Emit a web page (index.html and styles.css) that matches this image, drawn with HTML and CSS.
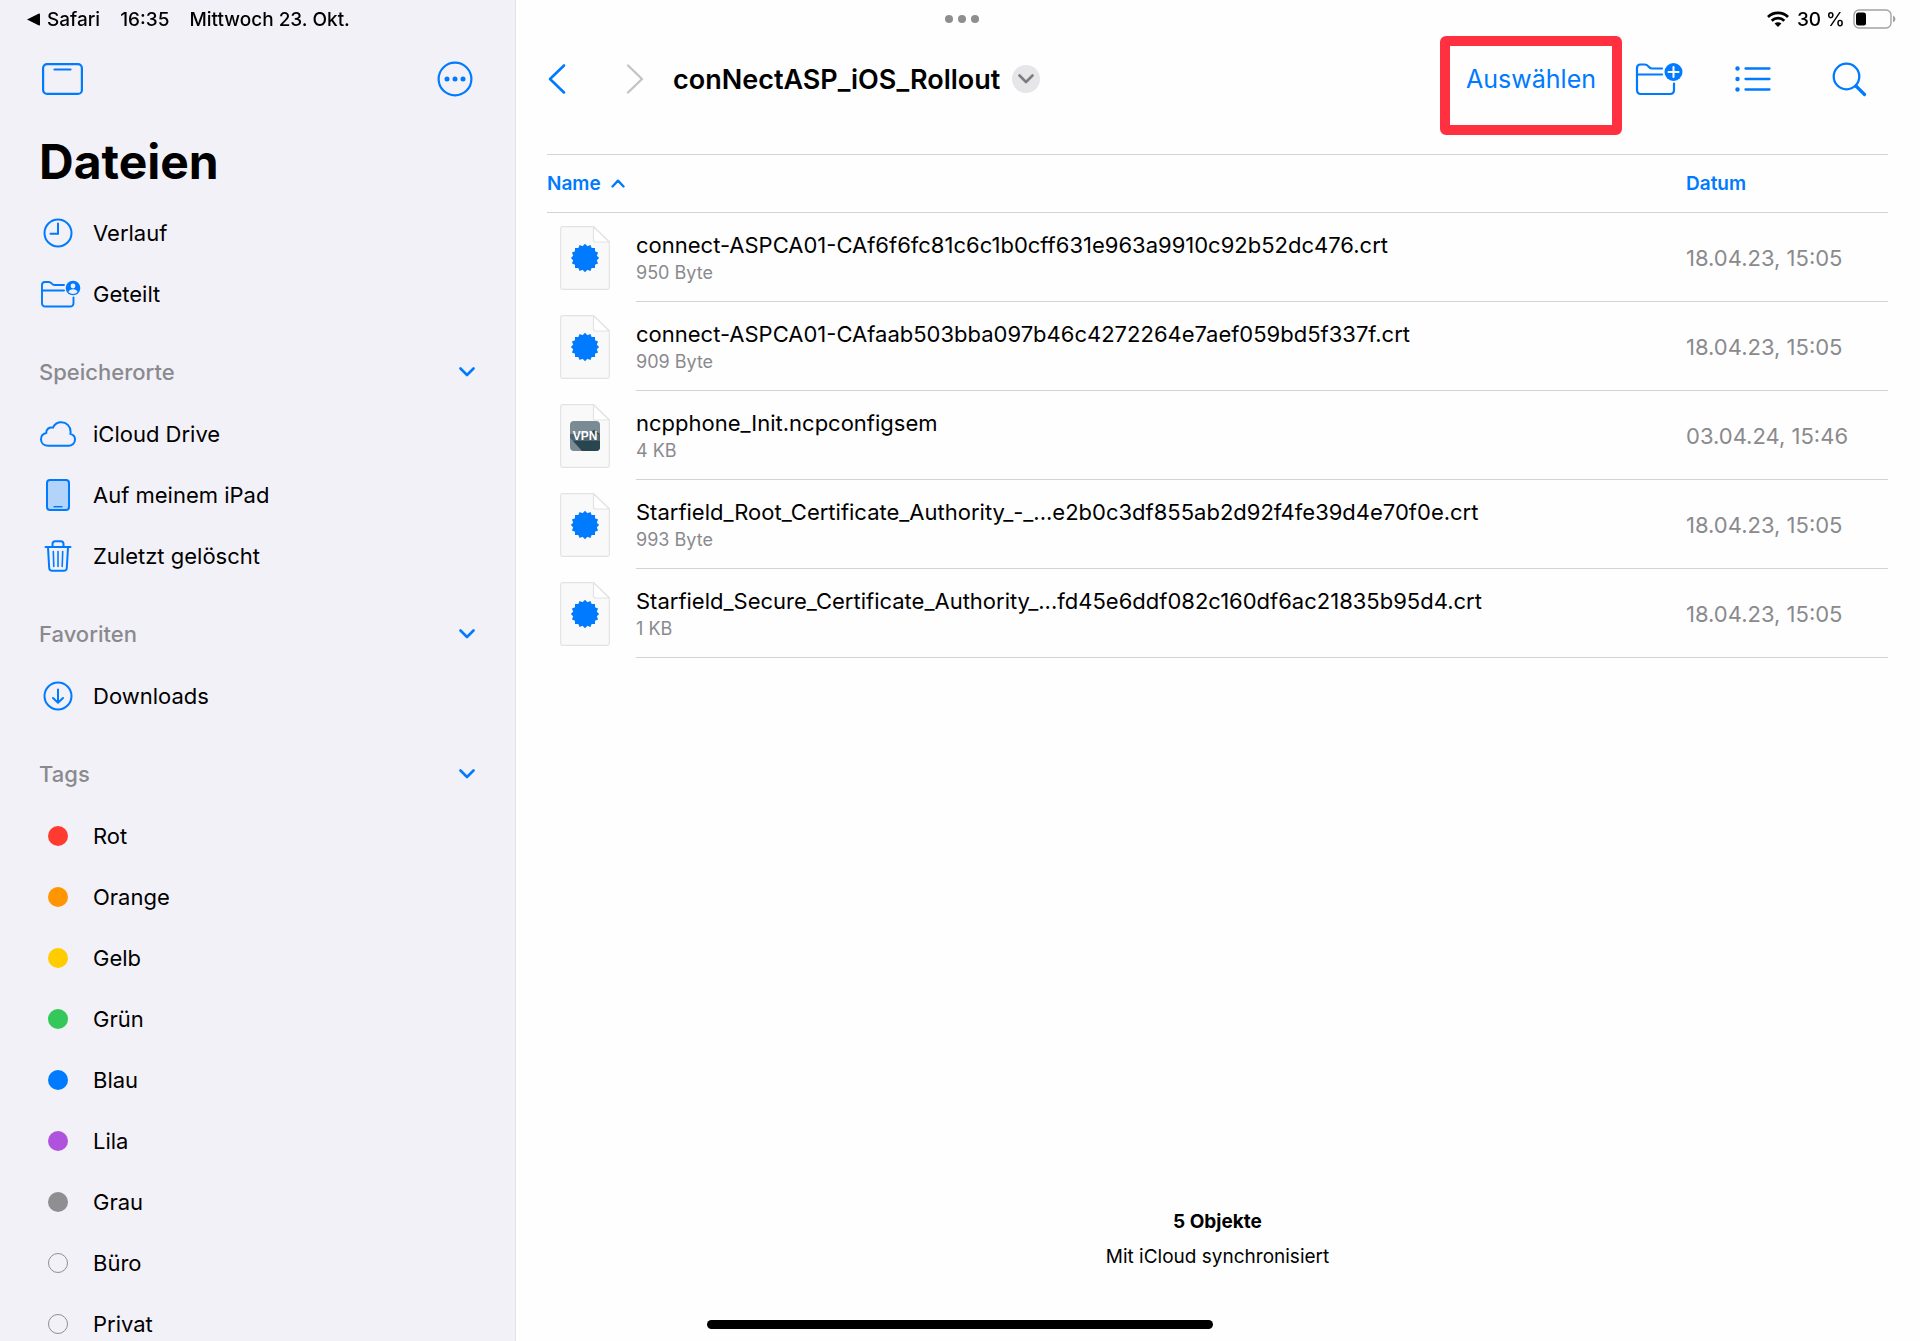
FILE: index.html
```html
<!DOCTYPE html>
<html lang="de">
<head>
    <meta charset="utf-8">
    <meta name="viewport" content="width=device-width, initial-scale=1">
    <title>Dateien</title>
    <link rel="stylesheet" href="styles.css">
</head>
<body>
    <!-- shared shapes -->
    <svg class="defs" aria-hidden="true">
        <symbol id="chevron-down" viewBox="0 0 16 10">
            <path d="M1.500 1.500 8 8l6.500-6.500" fill="none" stroke="currentColor" stroke-width="2.600" stroke-linecap="round" stroke-linejoin="round"/>
        </symbol>
        <symbol id="page" viewBox="0 0 50 64">
            <path d="M2.500.7H33.500L49.300 16V61.500a1.800 1.800 0 0 1-1.800 1.800H2.500A1.800 1.800 0 0 1 .7 61.500V2.500A1.800 1.800 0 0 1 2.500.7Z" fill="#f9f9f9" stroke="#e3e3e5" stroke-width="1.200"/>
            <path d="M33.500.7V14a2 2 0 0 0 2 2H49.300Z" fill="#fff" stroke="#e3e3e5" stroke-width="1.200"/>
        </symbol>
        <symbol id="cert-file" viewBox="0 0 50 64">
            <use href="#page"/>
            <g transform="translate(25 32)" fill="#007aff">
                <rect x="-10" y="-10" width="20" height="20"/>
                <rect x="-10" y="-10" width="20" height="20" transform="rotate(22.5)"/>
                <rect x="-10" y="-10" width="20" height="20" transform="rotate(45)"/>
                <rect x="-10" y="-10" width="20" height="20" transform="rotate(67.5)"/>
            </g>
        </symbol>
    </svg>

    <header class="status">
        <div class="status-left">
            <a href="#" class="back-app"><svg width="13" height="13" viewBox="0 0 13 13"><path d="M0 6.500 12 .5Q13 .3 13 1.500v10q0 1.200-1 1Z"/></svg>Safari</a>
            <span>16:35</span>
            <span>Mittwoch 23. Okt.</span>
        </div>
        <button class="multitask" aria-label="Multitasking"><i></i><i></i><i></i></button>
        <div class="status-right">
            <svg width="22" height="16" viewBox="0 0 22 16">
                <g fill="none" stroke="#000" stroke-width="2.800">
                    <path d="M1 6a14.300 14.300 0 0 1 20 0"/>
                    <path d="M4.700 9.700a9 9 0 0 1 12.600 0"/>
                </g>
                <path d="M11 16 7.600 12.600a4.900 4.900 0 0 1 6.800 0Z"/>
            </svg>
            <span>30 %</span>
            <svg width="43" height="20" viewBox="0 0 43 20">
                <rect x="1" y="1" width="37" height="18" rx="5" fill="none" stroke="#a3a3a5" stroke-width="1.400"/>
                <rect x="3" y="3.500" width="10" height="13" rx="2.500"/>
                <path d="M40 6.500q2.500 1 2.500 3.500t-2.500 3.500Z" fill="#a3a3a5"/>
            </svg>
        </div>
    </header>

    <div class="app">
        <aside class="sidebar">
            <div class="toolbar">
                <button aria-label="Seitenleiste">
                    <svg width="41" height="32" viewBox="0 0 41 32" fill="none" stroke="currentColor" stroke-width="2.200" stroke-linecap="round"><rect x="1.100" y="1.100" width="38.800" height="29.800" rx="4"/><path d="M12.500 6.500h16"/></svg>
                </button>
                <button aria-label="Mehr">
                    <svg width="36" height="36" viewBox="0 0 36 36"><circle cx="18" cy="18" r="16.400" fill="none" stroke="currentColor" stroke-width="2.200"/><g fill="currentColor"><circle cx="10" cy="18" r="2.500"/><circle cx="18" cy="18" r="2.500"/><circle cx="26" cy="18" r="2.500"/></g></svg>
                </button>
            </div>
            <h1>Dateien</h1>
            <nav>
                <a href="#" class="item"><span class="icon">
                    <svg width="30" height="30" viewBox="0 0 30 30" fill="none" stroke="currentColor" stroke-width="2" stroke-linecap="round"><circle cx="15" cy="15" r="13.500"/><path d="M15 5.500V15.700H7.500"/></svg>
                </span>Verlauf</a>
                <a href="#" class="item"><span class="icon">
                    <svg class="wide" width="41" height="28" viewBox="0 0 41 28"><g fill="none" stroke="currentColor" stroke-width="1.900" stroke-linecap="round"><path d="M24 5H14.500Q13 5 11.800 3.600 10.500 2 8.500 2H5Q2 2 2 5V23q0 3.500 3.500 3.500H30q3.500 0 3.500-3.500V17.500"/><path d="M2 10.500H24"/></g><circle cx="33" cy="8" r="7.300" fill="currentColor"/><circle cx="33" cy="6" r="2.400" fill="#f2f1f7"/><path d="M28.500 12.300q.6-3 4.500-3t4.500 3Q35.500 14 33 14t-4.500-1.700Z" fill="#f2f1f7"/></svg>
                </span>Geteilt</a>

                <button class="section">Speicherorte<svg width="16" height="10"><use href="#chevron-down"/></svg></button>
                <a href="#" class="item"><span class="icon">
                    <svg width="36" height="26" viewBox="0 0 36 26" fill="none" stroke="currentColor" stroke-width="2"><path d="M8.500 24.800C4 24.800 1 22 1 18.200 1 15 3.200 12.600 6.200 12 6 8.500 9.200 5.600 13 6.600 14.600 3 17.800 1.200 21.200 1.200c5.300 0 9.300 4 9.400 9.500 0 .9 0 1.500-.2 2.200 2.800.7 4.600 2.800 4.600 5.600 0 3.600-2.800 6.300-6.500 6.300Z"/></svg>
                </span>iCloud Drive</a>
                <a href="#" class="item"><span class="icon">
                    <svg width="24" height="32" viewBox="0 0 24 32" stroke="currentColor" stroke-width="2"><rect x="1" y="1" width="22" height="30" rx="3" fill="#b2d4fb"/><path d="M7.500 27.700h9" stroke-width="1.500"/></svg>
                </span>Auf meinem iPad</a>
                <a href="#" class="item"><span class="icon">
                    <svg width="28" height="32" viewBox="0 0 28 32" fill="none" stroke="currentColor" stroke-width="2" stroke-linecap="round" stroke-linejoin="round"><path d="M1.500 7h25M8.500 6.500V4q0-2.800 2.800-2.800h5.400q2.800 0 2.800 2.800V6.500M4 7.500 5.200 28q.2 2.800 3 2.800H19.800q2.800 0 3-2.800L24 7.500"/><path d="M9.300 11.500 9.800 26.500M14 11.500V26.500M18.700 11.500 18.200 26.500" stroke-width="1.600"/></svg>
                </span>Zuletzt gelöscht</a>

                <button class="section">Favoriten<svg width="16" height="10"><use href="#chevron-down"/></svg></button>
                <a href="#" class="item"><span class="icon">
                    <svg width="30" height="30" viewBox="0 0 30 30" fill="none" stroke="currentColor" stroke-width="2" stroke-linecap="round" stroke-linejoin="round"><circle cx="15" cy="15" r="13.500"/><path d="M15 8.500V21.500M10 17l5 4.700 5-4.700"/></svg>
                </span>Downloads</a>

                <button class="section">Tags<svg width="16" height="10"><use href="#chevron-down"/></svg></button>
                <a href="#" class="item"><span class="icon"><i class="dot red"></i></span>Rot</a>
                <a href="#" class="item"><span class="icon"><i class="dot orange"></i></span>Orange</a>
                <a href="#" class="item"><span class="icon"><i class="dot yellow"></i></span>Gelb</a>
                <a href="#" class="item"><span class="icon"><i class="dot green"></i></span>Grün</a>
                <a href="#" class="item"><span class="icon"><i class="dot blue"></i></span>Blau</a>
                <a href="#" class="item"><span class="icon"><i class="dot purple"></i></span>Lila</a>
                <a href="#" class="item"><span class="icon"><i class="dot gray"></i></span>Grau</a>
                <a href="#" class="item"><span class="icon"><i class="dot empty"></i></span>Büro</a>
                <a href="#" class="item"><span class="icon"><i class="dot empty"></i></span>Privat</a>
            </nav>
        </aside>

        <main class="content">
            <div class="toolbar">
                <div class="path">
                    <button aria-label="Zurück">
                        <svg width="20" height="32" viewBox="0 0 20 32" fill="none" stroke="currentColor" stroke-width="2.600" stroke-linecap="round" stroke-linejoin="round"><path d="M17 2.500 3 16l14 13.500"/></svg>
                    </button>
                    <button class="forward" aria-label="Vorwärts" disabled>
                        <svg width="20" height="32" viewBox="0 0 20 32" fill="none" stroke="currentColor" stroke-width="2.400" stroke-linecap="round" stroke-linejoin="round"><path d="M3 2.500 17 16 3 29.500"/></svg>
                    </button>
                    <h2>conNectASP_iOS_Rollout</h2>
                    <button class="folder-menu" aria-label="Ordneroptionen"><svg width="16" height="10"><use href="#chevron-down"/></svg></button>
                </div>
                <div class="actions">
                    <button class="select">Auswählen</button>
                    <button aria-label="Neuer Ordner">
                        <svg width="48" height="34" viewBox="0 0 48 34"><g fill="none" stroke="currentColor" stroke-width="2.200" stroke-linecap="round"><path d="M27 6.500H17Q15 6.500 13.500 4.500 12.200 2.500 10 2.500H5.500Q2 2.500 2 6V28q0 4 4 4H35q4 0 4-4V21.500"/><path d="M2 12.500H27"/></g><circle cx="38.500" cy="10" r="9" fill="currentColor"/><path d="M38.500 5v10M33.500 10h10" stroke="#fff" stroke-width="2" stroke-linecap="round"/></svg>
                    </button>
                    <button aria-label="Listenansicht">
                        <svg width="36" height="28" viewBox="0 0 36 28"><path d="M10.500 3.500H34.500M10.500 14H34.500M10.500 24.500H34.500" stroke="currentColor" stroke-width="2.300" stroke-linecap="round"/><g fill="currentColor"><circle cx="2.500" cy="3.500" r="2.200"/><circle cx="2.500" cy="14" r="2.200"/><circle cx="2.500" cy="24.500" r="2.200"/></g></svg>
                    </button>
                    <button class="search" aria-label="Suchen">
                        <svg width="35" height="35" viewBox="0 0 35 35" fill="none" stroke="currentColor" stroke-linecap="round"><circle cx="14.500" cy="14.500" r="12.800" stroke-width="2.300"/><path d="M24 24 32.500 32.500" stroke-width="3.200"/></svg>
                    </button>
                </div>
            </div>

            <table class="files">
                <thead>
                    <tr>
                        <th colspan="2"><button class="sort">Name<svg width="14" height="9" viewBox="0 0 14 9" fill="none" stroke="currentColor" stroke-width="2.400" stroke-linecap="round" stroke-linejoin="round"><path d="M1.500 7.500 7 1.700l5.500 5.800"/></svg></button></th>
                        <th class="date"><button class="sort">Datum</button></th>
                    </tr>
                </thead>
                <tbody>
                    <tr>
                        <td class="thumb"><svg width="50" height="64"><use href="#cert-file"/></svg></td>
                        <td><div class="name">connect-ASPCA01-CAf6f6fc81c6c1b0cff631e963a9910c92b52dc476.crt</div><div class="size">950 Byte</div></td>
                        <td class="date">18.04.23, 15:05</td>
                    </tr>
                    <tr>
                        <td class="thumb"><svg width="50" height="64"><use href="#cert-file"/></svg></td>
                        <td><div class="name">connect-ASPCA01-CAfaab503bba097b46c4272264e7aef059bd5f337f.crt</div><div class="size">909 Byte</div></td>
                        <td class="date">18.04.23, 15:05</td>
                    </tr>
                    <tr>
                        <td class="thumb">
                            <svg width="50" height="64" viewBox="0 0 50 64">
                                <use href="#page"/>
                                <rect x="10" y="17" width="30" height="30" rx="4" fill="#7b8b93"/>
                                <path d="M13 37 34 26 40 30V43a4 4 0 0 1-4 4H22Z" fill="#29454f"/>
                                <path d="M10 30H40V37H13L10 34Z" fill="#4f646e"/>
                                <text class="vpn" x="25" y="36" text-anchor="middle">VPN</text>
                            </svg>
                        </td>
                        <td><div class="name">ncpphone_Init.ncpconfigsem</div><div class="size">4 KB</div></td>
                        <td class="date">03.04.24, 15:46</td>
                    </tr>
                    <tr>
                        <td class="thumb"><svg width="50" height="64"><use href="#cert-file"/></svg></td>
                        <td><div class="name">Starfield_Root_Certificate_Authority_-_...e2b0c3df855ab2d92f4fe39d4e70f0e.crt</div><div class="size">993 Byte</div></td>
                        <td class="date">18.04.23, 15:05</td>
                    </tr>
                    <tr>
                        <td class="thumb"><svg width="50" height="64"><use href="#cert-file"/></svg></td>
                        <td><div class="name">Starfield_Secure_Certificate_Authority_...fd45e6ddf082c160df6ac21835b95d4.crt</div><div class="size">1 KB</div></td>
                        <td class="date">18.04.23, 15:05</td>
                    </tr>
                </tbody>
            </table>

            <footer class="summary">
                <strong>5 Objekte</strong>
                <span>Mit iCloud synchronisiert</span>
            </footer>
        </main>
    </div>
    <div class="home-bar"></div>
</body>
</html>
```
FILE: styles.css
```css
* {
    box-sizing: border-box;
}

body {
    margin: 0;
    background-color: #fefefe;
    color: #000;
    font-family: Inter, "Liberation Sans", sans-serif;
    font-size: 22px;
}

button {
    display: flex;
    align-items: center;
    padding: 0;
    border: 0;
    background: none;
    color: #007aff;
    font: inherit;
    cursor: pointer;
}

a {
    color: inherit;
    text-decoration: none;
}

svg {
    display: block;
    flex: none;
}

.defs {
    position: absolute;
    width: 0;
    height: 0;
}

/* status bar lies over sidebar and content */
.status {
    position: absolute;
    top: 0;
    left: 0;
    right: 0;
    z-index: 1;
    display: grid;
    grid-template-columns: 1fr auto 1fr;
    align-items: center;
    height: 38px;
    padding: 0 24px 0 27px;
    font-size: 19px;
    font-weight: 500;
}

.status-left {
    display: flex;
    gap: 20px;
}

.back-app {
    display: flex;
    align-items: center;
    gap: 7px;
}

.multitask {
    gap: 5px;
}

.multitask i {
    width: 8px;
    height: 8px;
    border-radius: 50%;
    background-color: #8e8e90;
}

.status-right {
    display: flex;
    align-items: center;
    justify-content: flex-end;
    gap: 8px;
}

.app {
    display: grid;
    grid-template-columns: 516px 1fr;
    height: 100vh;
}

.toolbar {
    display: flex;
    align-items: center;
    justify-content: space-between;
    height: 82px;
}

.sidebar {
    padding: 38px 40px 0 39px;
    border-right: 1px solid #e2e2e7;
    background-color: #f2f1f7;
    overflow: auto;
    scrollbar-width: none;
}

.sidebar .toolbar {
    padding: 0 2px 0 3px;
}

h1 {
    margin: 0;
    padding-top: 2px;
    font-size: 48px;
    font-weight: 700;
    line-height: 80px;
}

.item {
    display: flex;
    align-items: center;
    gap: 16px;
    height: 61px;
}

.icon {
    display: flex;
    justify-content: center;
    width: 38px;
    color: #007aff;
}

.icon .wide {
    margin-right: -5px;
}

.section {
    justify-content: space-between;
    width: 100%;
    height: 63px;
    margin-top: 16px;
    color: #8a8a8e;
    font-weight: 500;
}

.section svg {
    color: #007aff;
}

.dot {
    width: 20px;
    height: 20px;
    border-radius: 50%;
}

.red { background-color: #ff3b30; }
.orange { background-color: #ff9500; }
.yellow { background-color: #ffcc00; }
.green { background-color: #34c759; }
.blue { background-color: #007aff; }
.purple { background-color: #af52de; }
.gray { background-color: #8e8e93; }
.empty { border: 1px solid #8e8e93; }

.content {
    display: flex;
    flex-direction: column;
    padding: 38px 32px 67px 31px;
}

.path,
.actions {
    display: flex;
    align-items: center;
}

.path .forward {
    margin-left: 58px;
    color: #c4c4c6;
}

h2 {
    margin: 0 12px 0 28px;
    font-size: 27px;
    font-weight: 600;
}

.folder-menu {
    justify-content: center;
    width: 28px;
    height: 28px;
    border-radius: 50%;
    background-color: #e6e6e8;
    color: #7c7c80;
}

.actions {
    gap: 52px;
    padding-right: 21px;
}

.actions .search {
    margin-left: 9px;
}

.select {
    position: relative;
    margin-right: -13px;
    font-size: 25px;
}

/* red marker frame around the button */
.select::after {
    content: "";
    position: absolute;
    top: -28px;
    bottom: -41px;
    left: -26px;
    right: -26px;
    border: 10px solid #ff3141;
    border-radius: 6px;
    pointer-events: none;
}

.files {
    width: 100%;
    margin-top: 34px;
    border-collapse: separate;
    border-spacing: 0;
}

.files th {
    height: 59px;
    padding: 0;
    border-top: 1px solid #d3d3d5;
    border-bottom: 1px solid #d3d3d5;
    text-align: left;
}

.sort {
    gap: 10px;
    font-size: 19px;
    font-weight: 600;
}

.files td {
    height: 89px;
    padding: 2px 0 0;
    border-bottom: 1px solid #d3d3d5;
}

.files .thumb {
    width: 89px;
    padding: 0 0 0 13px;
    border: 0;
}

.files .date {
    width: 202px;
    color: #8a8a8e;
}

.name {
    line-height: 30px;
}

.size {
    color: #8a8a8e;
    font-size: 18px;
    line-height: 26px;
}

.vpn {
    fill: #fff;
    font-size: 12px;
    font-weight: 700;
    font-family: "Liberation Sans Narrow", "Liberation Sans", sans-serif;
}

.summary {
    display: flex;
    flex-direction: column;
    align-items: center;
    margin-top: auto;
    font-size: 19px;
    line-height: 35px;
}

.summary strong {
    font-weight: 700;
}

.home-bar {
    position: fixed;
    bottom: 12px;
    left: 50%;
    width: 506px;
    height: 9px;
    margin-left: -253px;
    border-radius: 5px;
    background-color: #000;
}
```
